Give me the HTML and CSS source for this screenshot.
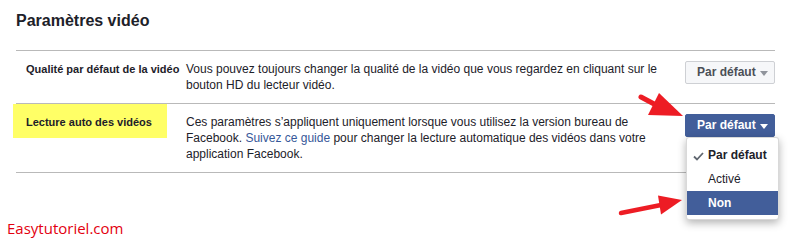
FILE: index.html
```html
<!DOCTYPE html>
<html lang="fr">
<head>
<meta charset="utf-8">
<title>Paramètres vidéo</title>
<link rel="stylesheet" href="styles.css">
</head>
<body>
<div class="page">
  <h2 class="title">Paramètres vidéo</h2>
  <div class="settings">
    <div class="row">
      <div class="label">Qualité par défaut de la vidéo</div>
      <div class="desc">Vous pouvez toujours changer la qualité de la vidéo que vous regardez en cliquant sur le bouton HD du lecteur vidéo.</div>
      <div class="ctrl">
        <button class="select">Par défaut<span class="caret"></span></button>
      </div>
    </div>
    <div class="row">
      <div class="label highlight">Lecture auto des vidéos</div>
      <div class="desc">Ces paramètres s’appliquent uniquement lorsque vous utilisez la version bureau de Facebook. <a href="#">Suivez ce guide</a> pour changer la lecture automatique des vidéos dans votre application Facebook.</div>
      <div class="ctrl">
        <button class="select primary">Par défaut<span class="caret"></span></button>
        <ul class="menu">
          <li class="item checked"><svg class="check" width="11" height="9" viewBox="0 0 11 9"><path d="M1 4.5 L4 7.5 L10 1" fill="none" stroke="#606770" stroke-width="1.8"/></svg>Par défaut</li>
          <li class="item">Activé</li>
          <li class="item active">Non</li>
        </ul>
      </div>
    </div>
  </div>
  <div class="watermark">Easytutoriel.com</div>
  <svg class="arrows" width="793" height="243" viewBox="0 0 793 243">
    <line x1="641" y1="97" x2="656" y2="105" stroke="#ed1c24" stroke-width="5" stroke-linecap="round"/>
    <polygon points="659,93 683,116 648,115" fill="#ed1c24"/>
    <line x1="621" y1="213" x2="661" y2="205" stroke="#ed1c24" stroke-width="4.5" stroke-linecap="round"/>
    <polygon points="658,195.5 682,200 661,214.5" fill="#ed1c24"/>
  </svg>
</div>
</body>
</html>
```

FILE: styles.css
```css
* { box-sizing: border-box; }

body {
  margin: 0;
  background: #ffffff;
  font-family: "Liberation Sans", Arial, sans-serif;
  color: #1d2129;
}

.page {
  position: relative;
  width: 793px;
  height: 243px;
  overflow: hidden;
}

.title {
  margin: 11px 0 0 16px;
  font-size: 16px;
  line-height: 20px;
  font-weight: bold;
  color: #1d2129;
}

.settings {
  margin: 19px 0 0 16px;
  width: 759px;
  border-bottom: 1px solid #b9b9b9;
}

.row {
  display: grid;
  grid-template-columns: 170px 1fr 90px;
  align-items: start;
  padding: 10px 0;
  border-top: 1px solid #b9b9b9;
}

.label {
  padding-left: 10px;
  font-size: 11px;
  font-weight: bold;
  line-height: 16px;
  color: #1d2129;
}

.label.highlight {
  margin: -10px 0 0 -3px;
  width: 154px;
  height: 34px;
  padding: 10px 0 0 13px;
  background: #ffff66;
}

.desc {
  padding-right: 10px;
  font-size: 12px;
  line-height: 16px;
  color: #1d2129;
}

.desc a {
  color: #365899;
  text-decoration: none;
}

.ctrl {
  position: relative;
}

.select {
  display: flex;
  align-items: center;
  width: 90px;
  height: 23px;
  margin: 0;
  padding: 0 0 0 11px;
  border: 1px solid #ced0d4;
  border-radius: 2px;
  background: #f6f7f9;
  font-family: "Liberation Sans", Arial, sans-serif;
  font-size: 12px;
  font-weight: bold;
  line-height: 21px;
  color: #4b4f56;
}

.caret {
  display: inline-block;
  width: 0;
  height: 0;
  margin: 2px 0 0 4px;
  border-left: 4.5px solid transparent;
  border-right: 4.5px solid transparent;
  border-top: 5px solid #90949c;
}

.select.primary {
  background: #425e9a;
  border-color: #425e9a;
  color: #ffffff;
}

.select.primary .caret {
  border-top-color: #ffffff;
}

.menu {
  position: absolute;
  top: 23px;
  left: 1px;
  width: 93px;
  margin: 0;
  padding: 5px 0 4px;
  list-style: none;
  background: #ffffff;
  border: 1px solid rgba(0, 0, 0, 0.15);
  border-radius: 3px;
  box-shadow: 0 3px 8px rgba(0, 0, 0, 0.3);
}

.item {
  position: relative;
  height: 24px;
  padding-left: 21px;
  font-size: 12px;
  line-height: 24px;
  color: #1d2129;
}

.item.checked {
  font-weight: bold;
}

.item.active {
  background: #425e9a;
  color: #ffffff;
  font-weight: bold;
}

.check {
  position: absolute;
  left: 6px;
  top: 9px;
}

.watermark {
  margin: 45px 0 0 7px;
  font-family: "Open Sans", sans-serif;
  font-size: 15px;
  line-height: 20px;
  color: #e3000f;
}

.arrows {
  position: absolute;
  top: 0;
  left: 0;
  pointer-events: none;
}
```
